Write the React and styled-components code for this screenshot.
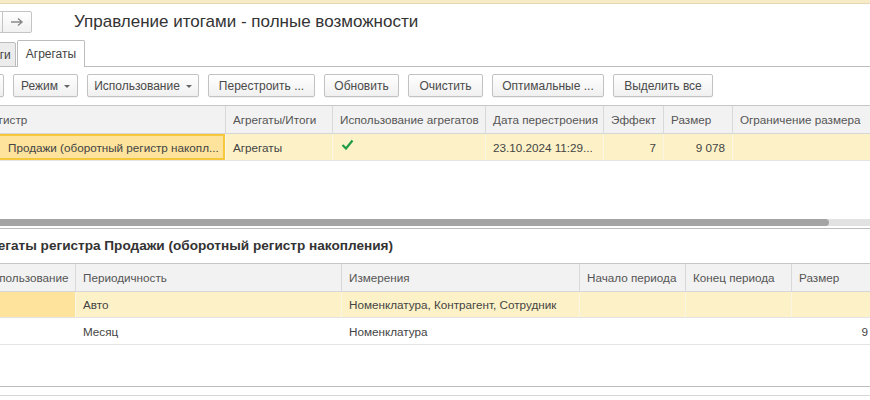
import styled, { createGlobalStyle } from 'styled-components'

const GlobalStyle = createGlobalStyle`
  html, body {
    margin: 0;
    padding: 0;
    background: #fff;
    overflow: hidden;
  }
  body {
    font-family: "Liberation Sans", Arial, sans-serif;
    color: #333;
  }
`

const Window = styled.div`
  width: 870px;
  height: 400px;
  overflow: hidden;
`

// the form is wider than the visible crop: it starts 40px left of the window
const Form = styled.div`
  margin-left: -40px;
  width: 940px;
`

const TopStrip = styled.div`
  height: 3px;
  background: #f7ebc6;
  border-bottom: 1px solid #e3d7b4;
`

const NavBar = styled.div`
  display: flex;
  align-items: center;
  height: 22px;
  margin-top: 7px;
  padding-left: 13px;
`

const NavButton = styled.div`
  width: 30px;
  height: 22px;
  box-sizing: border-box;
  border: 1px solid #c4c4c4;
  border-radius: ${(p) => (p.$side === 'left' ? '2px 0 0 2px' : '0 2px 2px 0')};
  margin-left: ${(p) => (p.$side === 'left' ? '0' : '-1px')};
  background: linear-gradient(#ffffff, #f1f1f1);
  display: flex;
  align-items: center;
  justify-content: center;
`

const Title = styled.h1`
  margin: 0 0 0 42px;
  font-size: 17px;
  font-weight: normal;
  color: #333;
  white-space: nowrap;
`

const TabStrip = styled.div`
  display: flex;
  align-items: flex-end;
  height: 25px;
  margin-top: 8px;
  padding-left: 14px;
  border-bottom: 1px solid #bcbcbc;
`

const Tab = styled.div`
  box-sizing: border-box;
  height: ${(p) => (p.$active ? '27px' : '25px')};
  margin-bottom: -1px;
  padding: 0 ${(p) => (p.$active ? '8px' : '4px')};
  display: flex;
  align-items: center;
  font-size: 12px;
  color: #444;
  background: ${(p) => (p.$active ? '#fff' : '#ececec')};
  border: 1px solid #bcbcbc;
  border-bottom: ${(p) => (p.$active ? 'none' : '1px solid #bcbcbc')};
  border-radius: 2px 2px 0 0;
  margin-left: ${(p) => (p.$active ? '1px' : '0')};
`

const Toolbar = styled.div`
  display: flex;
  gap: 9px;
  margin-top: 7px;
  padding-left: 14px;
`

const Button = styled.div`
  box-sizing: border-box;
  width: ${(p) => p.$w}px;
  height: 23px;
  border: 1px solid #c2c2c2;
  border-radius: 2px;
  background: linear-gradient(#ffffff, #f0f0f0);
  box-shadow: 0 1px 1px rgba(0, 0, 0, 0.06);
  display: flex;
  align-items: center;
  justify-content: center;
  gap: 6px;
  font-size: 12px;
  color: #4a4a4a;
  white-space: nowrap;
`

const Caret = styled.span`
  width: 0;
  height: 0;
  border-left: 3px solid transparent;
  border-right: 3px solid transparent;
  border-top: 3px solid #666;
  margin-top: 1px;
`

const Grid = styled.div`
  margin-top: ${(p) => p.$top}px;
  margin-left: 18px;
  height: ${(p) => p.$h}px;
  box-sizing: border-box;
  border-top: 1px solid #c6c6c6;
  border-bottom: 1px solid #bdbdbd;
  display: flex;
  flex-direction: column;
`

const Row = styled.div`
  display: grid;
  grid-template-columns: ${(p) => p.$cols};
  height: ${(p) => p.$h || 26}px;
  border-bottom: 1px solid ${(p) => (p.$head ? '#d6d6d6' : '#e4e4e4')};
  background: ${(p) => (p.$head ? '#f2f2f2' : p.$current ? '#fdf2c7' : '#fff')};
  flex-shrink: 0;
`

const Cell = styled.div`
  box-sizing: border-box;
  display: flex;
  align-items: center;
  justify-content: ${(p) => (p.$right ? 'flex-end' : 'flex-start')};
  padding: 0 7px 0 ${(p) => p.$indent || 7}px;
  font-size: 11.7px;
  color: ${(p) => (p.$head ? '#555' : '#444')};
  white-space: nowrap;
  overflow: hidden;
  border-right: 1px solid
    ${(p) => (p.$head ? '#d9d9d9' : p.$current ? '#fbf6e4' : 'transparent')};
  background: ${(p) => (p.$focus ? '#fde39c' : 'transparent')};
  box-shadow: ${(p) => (p.$frame ? 'inset 0 0 0 2px #f6c73a' : 'none')};
`

const CheckBox = styled.span`
  display: flex;
  margin-top: -6px;
`

const Filler = styled.div`
  flex: 1;
`

const ScrollTrack = styled.div`
  height: 7px;
  margin-bottom: 2px;
  background: #e2e2e2;
  border-radius: 4px;
  display: flex;
`

const ScrollThumb = styled.div`
  width: ${(p) => p.$w}px;
  background: #a4a4a4;
  border-radius: 4px;
`

const SectionTitle = styled.div`
  margin-top: 8px;
  padding-left: 14px;
  font-size: 13.6px;
  font-weight: bold;
  color: #333;
  height: 16px;
  line-height: 17px;
  white-space: nowrap;
`

const BottomLine = styled.div`
  margin-top: 8px;
  margin-left: 18px;
  border-top: 1px solid #d6d6d6;
`

const Check = () => (
  <svg width="13" height="11" viewBox="0 0 13 11">
    <path d="M1.5 6 L5 9.5 L11.5 1.5" fill="none" stroke="#1f9b48" strokeWidth="2.2" />
  </svg>
)

const ArrowRight = () => (
  <svg width="14" height="10" viewBox="0 0 14 10">
    <path d="M1 5 H12 M8 1.5 L12 5 L8 8.5" fill="none" stroke="#8a8a8a" strokeWidth="1.5" />
  </svg>
)

const ArrowLeft = () => (
  <svg width="14" height="10" viewBox="0 0 14 10">
    <path d="M13 5 H2 M6 1.5 L2 5 L6 8.5" fill="none" stroke="#b0b0b0" strokeWidth="1.5" />
  </svg>
)

const cols1 = '248px 107px 153px 118px 60px 69px 180px'
const cols2 = '98px 266px 238px 106px 106px 84px'

const App = () => {
  return (
    <Window>
      <GlobalStyle />
      <Form>
        <TopStrip />
        <NavBar>
          <NavButton $side="left">
            <ArrowLeft />
          </NavButton>
          <NavButton $side="right">
            <ArrowRight />
          </NavButton>
          <Title>Управление итогами - полные возможности</Title>
        </NavBar>

        <TabStrip>
          <Tab>Итоги</Tab>
          <Tab $active>Агрегаты</Tab>
        </TabStrip>

        <Toolbar>
          <Button $w={30} />
          <Button $w={65}>
            Режим <Caret />
          </Button>
          <Button $w={112}>
            Использование <Caret />
          </Button>
          <Button $w={107}>Перестроить ...</Button>
          <Button $w={75}>Обновить</Button>
          <Button $w={75}>Очистить</Button>
          <Button $w={112}>Оптимальные ...</Button>
          <Button $w={100}>Выделить все</Button>
        </Toolbar>

        <Grid $top={8} $h={124}>
          <Row $head $cols={cols1} $h={27}>
            <Cell $head>Регистр</Cell>
            <Cell $head>Агрегаты/Итоги</Cell>
            <Cell $head>Использование агрегатов</Cell>
            <Cell $head>Дата перестроения</Cell>
            <Cell $head>Эффект</Cell>
            <Cell $head>Размер</Cell>
            <Cell $head>Ограничение размера</Cell>
          </Row>
          <Row $current $cols={cols1}>
            <Cell $current $focus $frame $indent={30}>
              Продажи (оборотный регистр накопл...
            </Cell>
            <Cell $current>Агрегаты</Cell>
            <Cell $current $indent={8}>
              <CheckBox>
                <Check />
              </CheckBox>
            </Cell>
            <Cell $current>23.10.2024 11:29...</Cell>
            <Cell $current $right>
              7
            </Cell>
            <Cell $current $right>
              9 078
            </Cell>
            <Cell $current />
          </Row>
          <Filler />
          <ScrollTrack>
            <ScrollThumb $w={851} />
          </ScrollTrack>
        </Grid>

        <SectionTitle>Агрегаты регистра Продажи (оборотный регистр накопления)</SectionTitle>

        <Grid $top={10} $h={124}>
          <Row $head $cols={cols2} $h={27}>
            <Cell $head>Использование</Cell>
            <Cell $head>Периодичность</Cell>
            <Cell $head>Измерения</Cell>
            <Cell $head>Начало периода</Cell>
            <Cell $head>Конец периода</Cell>
            <Cell $head>Размер</Cell>
          </Row>
          <Row $current $cols={cols2} $h={25}>
            <Cell $current $focus />
            <Cell $current>Авто</Cell>
            <Cell $current>Номенклатура, Контрагент, Сотрудник</Cell>
            <Cell $current />
            <Cell $current />
            <Cell $current />
          </Row>
          <Row $cols={cols2}>
            <Cell />
            <Cell>Месяц</Cell>
            <Cell>Номенклатура</Cell>
            <Cell />
            <Cell />
            <Cell $right>9</Cell>
          </Row>
        </Grid>
        <BottomLine />
      </Form>
    </Window>
  )
}

export default App
